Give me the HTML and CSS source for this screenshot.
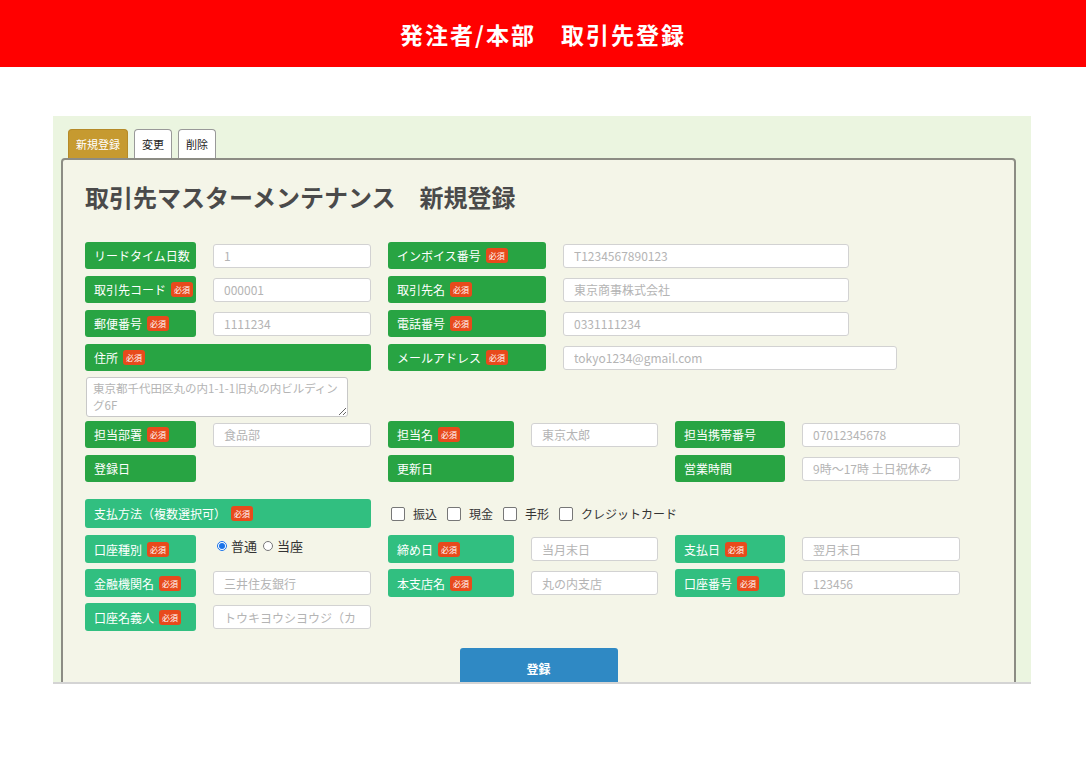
FILE: index.html
```html
<!DOCTYPE html>
<html lang="ja">

<head>
    <meta charset="UTF-8">
    <meta name="viewport" content="width=device-width, initial-scale=1.0">
    <title>取引先登録</title>
    <link rel="stylesheet" href="styles.css">
</head>

<body>
    <div class="topbar">
        <h1>発注者/本部　取引先登録</h1>
    </div>

    <div class="frame">
        <div class="tabs">
            <a class="tab active">新規登録</a>
            <a class="tab">変更</a>
            <a class="tab">削除</a>
        </div>

        <div class="panel">
            <h2>取引先マスターメンテナンス　新規登録</h2>

            <div class="rows">
                <div class="row row-a">
                    <div class="label">リードタイム日数</div>
                    <input class="field" placeholder="1">
                    <div class="label">インボイス番号 <span class="req">必須</span></div>
                    <input class="field mid" placeholder="T1234567890123">
                </div>
                <div class="row row-a">
                    <div class="label">取引先コード <span class="req">必須</span></div>
                    <input class="field" placeholder="000001">
                    <div class="label">取引先名 <span class="req">必須</span></div>
                    <input class="field mid" placeholder="東京商事株式会社">
                </div>
                <div class="row row-a">
                    <div class="label">郵便番号 <span class="req">必須</span></div>
                    <input class="field" placeholder="1111234">
                    <div class="label">電話番号 <span class="req">必須</span></div>
                    <input class="field mid" placeholder="0331111234">
                </div>
                <div class="row row-a">
                    <div class="label span2">住所 <span class="req">必須</span></div>
                    <div class="label">メールアドレス <span class="req">必須</span></div>
                    <input class="field wide" placeholder="tokyo1234@gmail.com">
                </div>
                <textarea class="address" placeholder="東京都千代田区丸の内1-1-1旧丸の内ビルディン&#10;グ6F"></textarea>

                <div class="row row-b">
                    <div class="label">担当部署 <span class="req">必須</span></div>
                    <input class="field" placeholder="食品部">
                    <div class="label">担当名 <span class="req">必須</span></div>
                    <input class="field" placeholder="東京太郎">
                    <div class="label">担当携帯番号</div>
                    <input class="field" placeholder="07012345678">
                </div>
                <div class="row row-b">
                    <div class="label">登録日</div>
                    <div></div>
                    <div class="label">更新日</div>
                    <div></div>
                    <div class="label">営業時間</div>
                    <input class="field" placeholder="9時〜17時 土日祝休み">
                </div>

                <!-- 支払情報 -->
                <div class="row row-b pay-first">
                    <div class="label pay span2">支払方法（複数選択可） <span class="req">必須</span></div>
                    <div class="checks">
                        <label><input type="checkbox"> 振込</label>
                        <label><input type="checkbox"> 現金</label>
                        <label><input type="checkbox"> 手形</label>
                        <label><input type="checkbox"> クレジットカード</label>
                    </div>
                </div>
                <div class="row row-b">
                    <div class="label pay">口座種別 <span class="req">必須</span></div>
                    <div class="radios">
                        <label><input type="radio" name="kind" checked> 普通</label>
                        <label><input type="radio" name="kind"> 当座</label>
                    </div>
                    <div class="label pay">締め日 <span class="req">必須</span></div>
                    <input class="field" placeholder="当月末日">
                    <div class="label pay">支払日 <span class="req">必須</span></div>
                    <input class="field" placeholder="翌月末日">
                </div>
                <div class="row row-b">
                    <div class="label pay">金融機関名 <span class="req">必須</span></div>
                    <input class="field" placeholder="三井住友銀行">
                    <div class="label pay">本支店名 <span class="req">必須</span></div>
                    <input class="field" placeholder="丸の内支店">
                    <div class="label pay">口座番号 <span class="req">必須</span></div>
                    <input class="field" placeholder="123456">
                </div>
                <div class="row row-b">
                    <div class="label pay">口座名義人 <span class="req">必須</span></div>
                    <input class="field" placeholder="トウキヨウシヨウジ（カ">
                </div>
            </div>

            <div class="actions">
                <button class="submit">登録</button>
            </div>
        </div>
    </div>
</body>

</html>
```

FILE: styles.css
```css
* {
    margin: 0;
    padding: 0;
    box-sizing: border-box;
}

body {
    background: #fff;
    font-family: "Noto Sans CJK JP", "Noto Sans", sans-serif;
    color: #333;
}

.topbar {
    height: 67px;
    background: #ff0000;
    display: flex;
    align-items: center;
    justify-content: center;
}

.topbar h1 {
    color: #fff;
    font-size: 23px;
    font-weight: bold;
    letter-spacing: 2px;
}

.frame {
    width: 978px;
    height: 568px;
    margin: 49px 0 0 53px;
    padding: 13px 15px 0 8px;
    background: #ebf5e0;
    border-bottom: 2px solid #d4d4d4;
    overflow: hidden;
}

.tabs {
    display: flex;
    gap: 6px;
    margin-left: 7px;
    height: 29px;
}

.tab {
    display: flex;
    align-items: center;
    justify-content: center;
    padding: 0 7px;
    font-size: 11px;
    color: #222;
    background: #fff;
    border: 1px solid #999;
    border-bottom: none;
    border-radius: 4px 4px 0 0;
}

.tab.active {
    background: #c69a30;
    border-color: #b58a28;
    color: #fff;
}

.panel {
    background: #f4f5e8;
    border: 2px solid #8c8c84;
    border-radius: 4px 4px 0 0;
    padding: 21px 0 0 22px;
    height: 540px;
}

.panel h2 {
    font-size: 24px;
    font-weight: bold;
    color: #4a4a4a;
    line-height: 32px;
    margin-bottom: 29px;
}

.rows {
    display: flex;
    flex-direction: column;
    gap: 7px;
}

.row {
    display: grid;
    column-gap: 17px;
    align-items: center;
    height: 27px;
}

.row-a {
    grid-template-columns: 111px 158px 158px auto;
}

.row-b {
    grid-template-columns: 111px 158px 126px 127px 110px 158px;
}

.row-b .field {
    width: 100%;
}

.span2 {
    grid-column: span 2;
}

.label {
    height: 27px;
    display: flex;
    align-items: center;
    gap: 5px;
    padding-left: 9px;
    background: #28a443;
    color: #fff;
    font-size: 12px;
    border-radius: 3px;
    white-space: nowrap;
}

.label.pay {
    background: #31bf80;
    height: 28px;
}

.req {
    display: inline-block;
    background: #e84a1c;
    color: #fff;
    font-size: 8px;
    line-height: 15px;
    padding: 0 3px;
    border-radius: 3px;
}

.field {
    height: 24px;
    width: 158px;
    border: 1px solid #d2d2d2;
    border-radius: 3px;
    background: #fff;
    padding: 0 10px;
    font-family: inherit;
    font-size: 12px;
}

.field.mid {
    width: 286px;
}

.field.wide {
    width: 334px;
}

.field::placeholder,
.address::placeholder {
    color: #b4b4b4;
}

.address {
    width: 262px;
    height: 40px;
    margin: -1px 0 -3px 1px;
    border: 1px solid #c8c8c8;
    border-radius: 3px;
    padding: 2px 6px;
    font-family: inherit;
    font-size: 11.5px;
    line-height: 17px;
    resize: vertical;
    background: #fff;
}

.pay-first {
    margin-top: 10px;
    height: 29px;
}

.pay-first .label {
    height: 29px;
}

.checks {
    grid-column: span 4;
    display: flex;
    gap: 10px;
    padding-left: 3px;
    font-size: 12px;
    color: #333;
}

.checks label {
    display: flex;
    align-items: center;
    gap: 8px;
}

.checks input {
    appearance: none;
    width: 14px;
    height: 14px;
    border: 1px solid #777;
    border-radius: 2px;
    background: #fff;
}

.radios {
    display: flex;
    gap: 6px;
    padding-left: 4px;
    font-size: 13px;
    color: #333;
    align-self: start;
    padding-top: 1px;
}

.radios label {
    display: flex;
    align-items: center;
    gap: 4px;
}

.radios input {
    width: 10px;
    height: 10px;
    margin: 0;
    accent-color: #1a73e8;
}

.actions {
    display: flex;
    justify-content: center;
    margin: 18px 0 0 -22px;
}

.submit {
    width: 158px;
    height: 40px;
    border: none;
    border-radius: 3px 3px 0 0;
    background: #2f89c4;
    color: #fff;
    font-family: inherit;
    font-size: 12px;
    font-weight: bold;
}
```
